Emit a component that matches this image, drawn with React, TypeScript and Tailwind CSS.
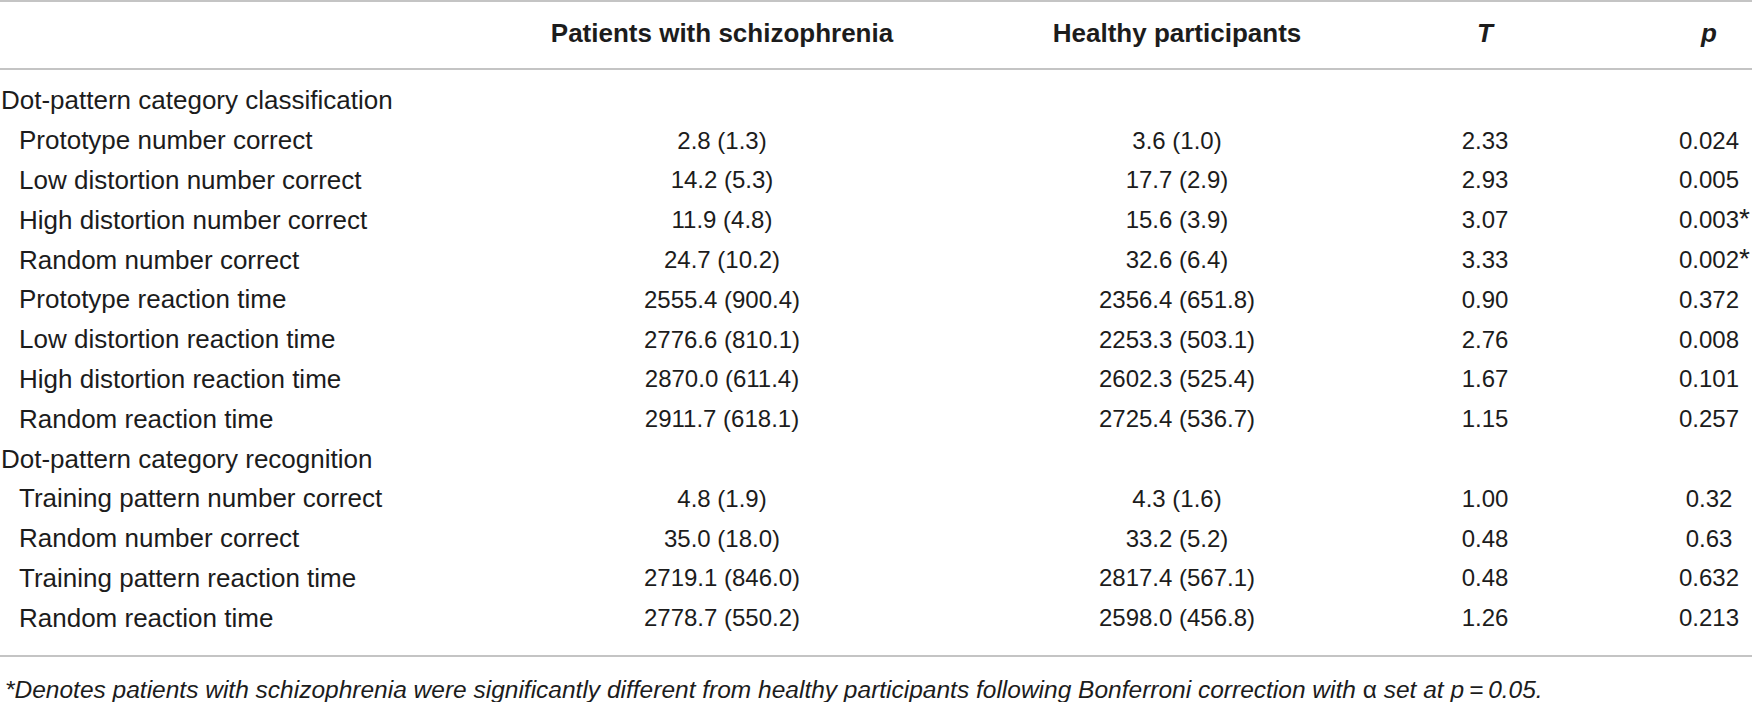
import React from "react";

type Row = {
  label: string;
  sub?: boolean;
  a?: string;
  b?: string;
  t?: string;
  p?: string;
  star?: boolean;
};

const rows: Row[] = [
  { label: "Dot-pattern category classification" },
  { label: "Prototype number correct", sub: true, a: "2.8 (1.3)", b: "3.6 (1.0)", t: "2.33", p: "0.024" },
  { label: "Low distortion number correct", sub: true, a: "14.2 (5.3)", b: "17.7 (2.9)", t: "2.93", p: "0.005" },
  { label: "High distortion number correct", sub: true, a: "11.9 (4.8)", b: "15.6 (3.9)", t: "3.07", p: "0.003", star: true },
  { label: "Random number correct", sub: true, a: "24.7 (10.2)", b: "32.6 (6.4)", t: "3.33", p: "0.002", star: true },
  { label: "Prototype reaction time", sub: true, a: "2555.4 (900.4)", b: "2356.4 (651.8)", t: "0.90", p: "0.372" },
  { label: "Low distortion reaction time", sub: true, a: "2776.6 (810.1)", b: "2253.3 (503.1)", t: "2.76", p: "0.008" },
  { label: "High distortion reaction time", sub: true, a: "2870.0 (611.4)", b: "2602.3 (525.4)", t: "1.67", p: "0.101" },
  { label: "Random reaction time", sub: true, a: "2911.7 (618.1)", b: "2725.4 (536.7)", t: "1.15", p: "0.257" },
  { label: "Dot-pattern category recognition" },
  { label: "Training pattern number correct", sub: true, a: "4.8 (1.9)", b: "4.3 (1.6)", t: "1.00", p: "0.32" },
  { label: "Random number correct", sub: true, a: "35.0 (18.0)", b: "33.2 (5.2)", t: "0.48", p: "0.63" },
  { label: "Training pattern reaction time", sub: true, a: "2719.1 (846.0)", b: "2817.4 (567.1)", t: "0.48", p: "0.632" },
  { label: "Random reaction time", sub: true, a: "2778.7 (550.2)", b: "2598.0 (456.8)", t: "1.26", p: "0.213" },
];

const grid = "grid grid-cols-[500px_444px_466px_150px_1fr] items-center";

export default function App() {
  return (
    <div className="w-[1752px] h-[702px] overflow-hidden bg-white text-[#1c1c1c] font-['Liberation_Sans',Arial,sans-serif]">
      {/* Kopfzeile */}
      <div className="border-t-2 border-b-2 border-[#c4c4c4]">
        <div className={`${grid} h-[66px] pb-[4px] text-[26px] font-bold`}>
          <div />
          <div className="text-center">Patients with schizophrenia</div>
          <div className="text-center">Healthy participants</div>
          <div className="text-center italic">T</div>
          <div className="flex justify-end pr-[3px]">
            <div className="w-[80px] text-center italic">p</div>
          </div>
        </div>
      </div>

      {/* Tabellenkörper */}
      <div className="pt-[11px] pb-[17px] border-b-2 border-[#c4c4c4]">
        {rows.map((r, i) => (
          <div key={i} className={`${grid} h-[39.8px]`}>
            <div className={r.sub ? "pl-[19px] text-[26px] whitespace-nowrap" : "pl-[1px] text-[26px] whitespace-nowrap"}>
              {r.label}
            </div>
            <div className="text-center text-[24px]">{r.a}</div>
            <div className="text-center text-[24px]">{r.b}</div>
            <div className="text-center text-[24px]">{r.t}</div>
            <div className="flex justify-end pr-[3px] text-[24px]">
              <div className="w-[80px] text-center">
                {r.p && (
                  <span className="relative">
                    {r.p}
                    {r.star && (
                      <span className="absolute left-full top-[-1px] text-[28px] leading-none">*</span>
                    )}
                  </span>
                )}
              </div>
            </div>
          </div>
        ))}
      </div>

      {/* Fußnote */}
      <div className="pt-[18px] pl-[5px] text-[24.5px] italic whitespace-nowrap leading-[30px]">
        *Denotes patients with schizophrenia were significantly different from healthy participants following Bonferroni correction with{" "}
        <span className="not-italic">α</span> set at p{"\u2009=\u20090.05."}
      </div>
    </div>
  );
}
